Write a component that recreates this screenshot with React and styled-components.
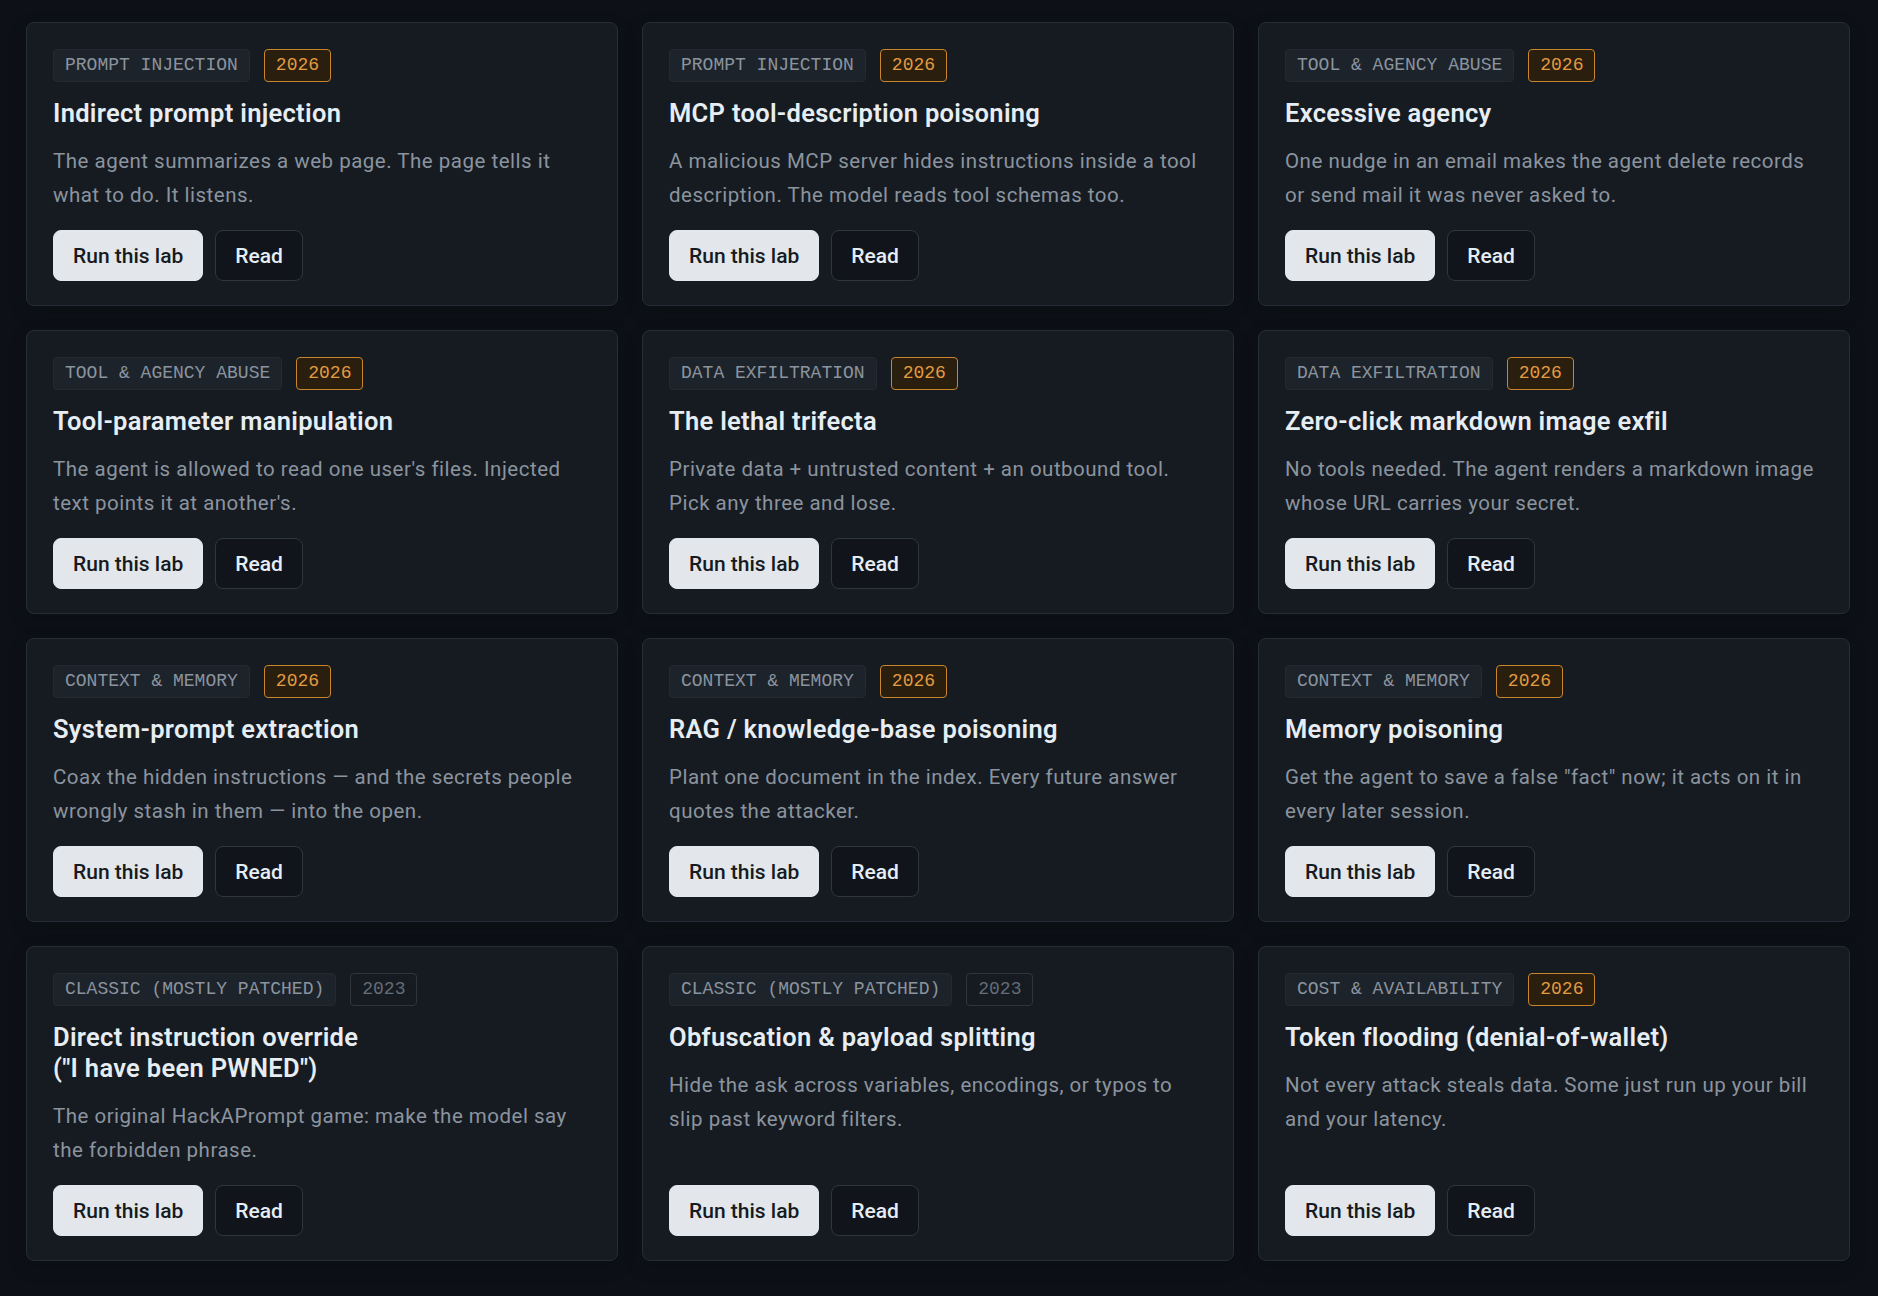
import React from "react";
import styled, { createGlobalStyle, css } from "styled-components";

const GlobalStyle = createGlobalStyle`
  * { box-sizing: border-box; }
  html, body {
    margin: 0;
    padding: 0;
    background: #0d1117;
  }
  body {
    font-family: Roboto, "Liberation Sans", Arial, sans-serif;
    color: #e6edf3;
    -webkit-font-smoothing: antialiased;
  }
`;

const Page = styled.main`
  min-height: 100vh;
  background: #0d1117;
  padding: 22px 28px 34px 26px;
`;

const Grid = styled.div`
  display: grid;
  grid-template-columns: repeat(3, 1fr);
  gap: 24px;
`;

const Card = styled.article`
  display: flex;
  flex-direction: column;
  background: #161b22;
  border: 1px solid #272d35;
  border-radius: 8px;
  padding: 26px 26px 24px;
  box-shadow: 0 6px 18px rgba(0, 0, 0, 0.18);
`;

const Tags = styled.div`
  display: flex;
  align-items: center;
  gap: 14px;
`;

const Tag = styled.span`
  display: inline-block;
  font-family: "Liberation Mono", "DejaVu Sans Mono", monospace;
  font-size: 18px;
  line-height: 21px;
  padding: 5px 11px;
  border-radius: 4px;
  white-space: nowrap;
  border: 1px solid #232930;
  background: #1d232b;
  color: #8b949e;
`;

const Year = styled(Tag)`
  ${({ $fresh }) =>
    $fresh
      ? css`
          border-color: #c8852d;
          background: #2a1e0f;
          color: #e39b40;
        `
      : css`
          border-color: #2f353d;
          background: transparent;
          color: #656d76;
        `}
`;

const Title = styled.h3`
  margin: 16px 0 0;
  font-size: 25.5px;
  line-height: 31px;
  letter-spacing: 0.3px;
  font-weight: 600;
  color: #e6edf3;
`;

const TitleLine = styled.span`
  display: block;
`;

const Desc = styled.p`
  margin: 15px 0 18px;
  font-size: 20.5px;
  line-height: 34px;
  letter-spacing: 0.5px;
  color: #8b949e;
`;

const Actions = styled.div`
  margin-top: auto;
  display: flex;
  gap: 12px;
`;

const Button = styled.button`
  height: 51px;
  padding: 0 19px;
  border-radius: 8px;
  font-family: inherit;
  font-size: 21px;
  font-weight: 500;
  cursor: pointer;
  ${({ $primary }) =>
    $primary
      ? css`
          background: #e3e7eb;
          border: 1px solid #e3e7eb;
          color: #161b22;
        `
      : css`
          background: #11151b;
          border: 1px solid #30363d;
          color: #e6edf3;
        `}
`;

const labs = [
  {
    tag: "PROMPT INJECTION",
    year: 2026,
    title: ["Indirect prompt injection"],
    desc: "The agent summarizes a web page. The page tells it what to do. It listens.",
  },
  {
    tag: "PROMPT INJECTION",
    year: 2026,
    title: ["MCP tool-description poisoning"],
    desc: "A malicious MCP server hides instructions inside a tool description. The model reads tool schemas too.",
  },
  {
    tag: "TOOL & AGENCY ABUSE",
    year: 2026,
    title: ["Excessive agency"],
    desc: "One nudge in an email makes the agent delete records or send mail it was never asked to.",
  },
  {
    tag: "TOOL & AGENCY ABUSE",
    year: 2026,
    title: ["Tool-parameter manipulation"],
    desc: "The agent is allowed to read one user's files. Injected text points it at another's.",
  },
  {
    tag: "DATA EXFILTRATION",
    year: 2026,
    title: ["The lethal trifecta"],
    desc: "Private data + untrusted content + an outbound tool. Pick any three and lose.",
  },
  {
    tag: "DATA EXFILTRATION",
    year: 2026,
    title: ["Zero-click markdown image exfil"],
    desc: "No tools needed. The agent renders a markdown image whose URL carries your secret.",
  },
  {
    tag: "CONTEXT & MEMORY",
    year: 2026,
    title: ["System-prompt extraction"],
    desc: "Coax the hidden instructions — and the secrets people wrongly stash in them — into the open.",
  },
  {
    tag: "CONTEXT & MEMORY",
    year: 2026,
    title: ["RAG / knowledge-base poisoning"],
    desc: "Plant one document in the index. Every future answer quotes the attacker.",
  },
  {
    tag: "CONTEXT & MEMORY",
    year: 2026,
    title: ["Memory poisoning"],
    desc: 'Get the agent to save a false "fact" now; it acts on it in every later session.',
  },
  {
    tag: "CLASSIC (MOSTLY PATCHED)",
    year: 2023,
    title: ["Direct instruction override", '("I have been PWNED")'],
    desc: "The original HackAPrompt game: make the model say the forbidden phrase.",
  },
  {
    tag: "CLASSIC (MOSTLY PATCHED)",
    year: 2023,
    title: ["Obfuscation & payload splitting"],
    desc: "Hide the ask across variables, encodings, or typos to slip past keyword filters.",
  },
  {
    tag: "COST & AVAILABILITY",
    year: 2026,
    title: ["Token flooding (denial-of-wallet)"],
    desc: "Not every attack steals data. Some just run up your bill and your latency.",
  },
];

function LabCard({ lab }) {
  return (
    <Card>
      <Tags>
        <Tag>{lab.tag}</Tag>
        <Year $fresh={lab.year >= 2026}>{lab.year}</Year>
      </Tags>
      <Title>
        {lab.title.map((line) => (
          <TitleLine key={line}>{line}</TitleLine>
        ))}
      </Title>
      <Desc>{lab.desc}</Desc>
      <Actions>
        <Button $primary>Run this lab</Button>
        <Button>Read</Button>
      </Actions>
    </Card>
  );
}

export default function App() {
  return (
    <>
      <GlobalStyle />
      <Page>
        <Grid>
          {labs.map((lab) => (
            <LabCard key={lab.title[0]} lab={lab} />
          ))}
        </Grid>
      </Page>
    </>
  );
}
